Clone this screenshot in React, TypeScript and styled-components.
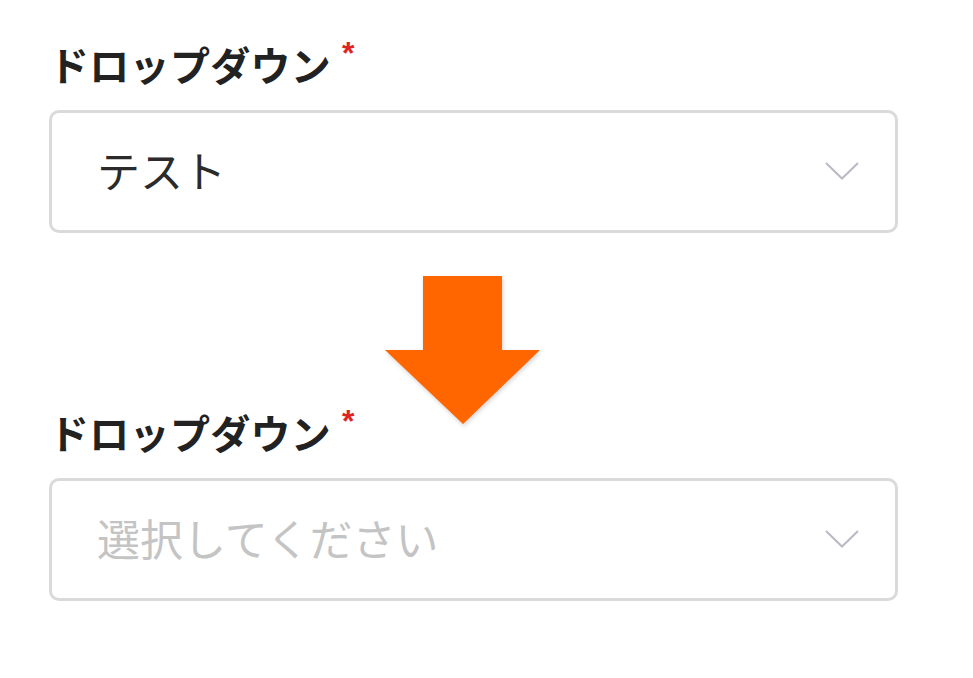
import React from 'react';
import styled, { createGlobalStyle } from 'styled-components';

const GlobalStyle = createGlobalStyle`
  html, body {
    margin: 0;
    padding: 0;
    background: #ffffff;
  }
  body {
    font-family: 'Noto Sans CJK JP', 'Noto Sans', sans-serif;
  }
`;

const Page = styled.div`
  width: 849px;
  padding: 38px 0 0 49px;
  display: flex;
  flex-direction: column;
`;

const Field = styled.div`
  display: flex;
  flex-direction: column;
`;

const Label = styled.div`
  display: flex;
  align-items: flex-start;
  height: 52px;
  font-size: 40px;
  line-height: 52px;
  font-weight: 700;
  color: #222222;
  letter-spacing: 0.3px;
`;

const Required = styled.span`
  font-size: 32px;
  line-height: 32px;
  font-weight: 700;
  color: #e02424;
  margin-left: 11px;
  margin-top: -1px;
  font-family: 'Liberation Sans', sans-serif;
`;

const Select = styled.div<{ $empty?: boolean }>`
  box-sizing: border-box;
  margin-top: 20px;
  height: 123px;
  border: 3px solid #dadada;
  border-radius: 10px;
  display: flex;
  align-items: center;
  justify-content: space-between;
  padding: 0 36px 6px 45px;
  font-size: 43px;
  color: ${(p) => (p.$empty ? '#c4c4c4' : '#2b2b2b')};
`;

const Chevron = styled.svg`
  width: 34px;
  height: 18px;
  flex-shrink: 0;
  margin-top: 4px;
`;

const ArrowRow = styled.div`
  display: flex;
  margin: 43px 0 -20px 336px;
  height: 150px;
`;

const ArrowIcon = styled.svg`
  width: 158px;
  height: 152px;
  filter: drop-shadow(1px 2px 2px rgba(0, 0, 0, 0.18));
`;

const DownChevron = () => (
  <Chevron viewBox="0 0 34 18">
    <polyline points="1,1 17,16.5 33,1" fill="none" stroke="#b9bac6" strokeWidth="2" />
  </Chevron>
);

const Dropdown = ({ value, placeholder }: { value?: string; placeholder: string }) => (
  <Field>
    <Label>
      ドロップダウン
      <Required>*</Required>
    </Label>
    <Select $empty={!value}>
      <span>{value || placeholder}</span>
      <DownChevron />
    </Select>
  </Field>
);

export default function App() {
  return (
    <>
      <GlobalStyle />
      <Page>
        <Dropdown value="テスト" placeholder="選択してください" />
        <ArrowRow>
          <ArrowIcon viewBox="0 0 158 152">
            <polygon
              points="38,0 117,0 117,74 155,74 78,148 0,74 38,74"
              fill="#ff6600"
            />
          </ArrowIcon>
        </ArrowRow>
        <Dropdown placeholder="選択してください" />
      </Page>
    </>
  );
}
